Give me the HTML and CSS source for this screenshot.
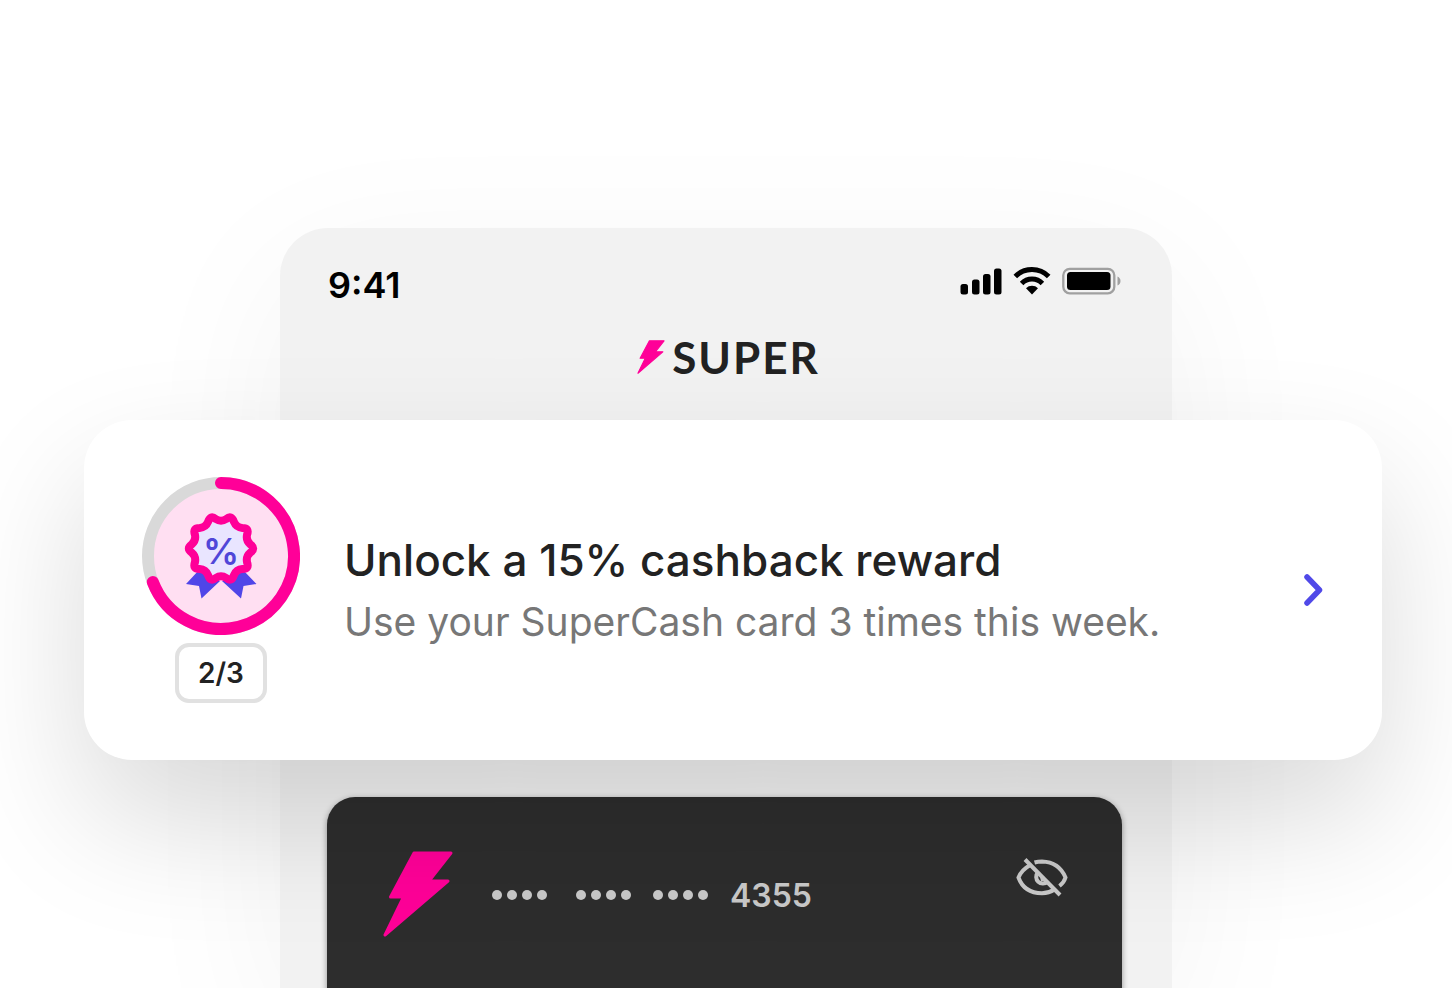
FILE: index.html
```html
<!DOCTYPE html>
<html lang="en">
<head>
<meta charset="utf-8">
<meta name="viewport" content="width=device-width, initial-scale=1">
<title>Super</title>
<link rel="stylesheet" href="styles.css">
</head>
<body>
<svg class="sprite" aria-hidden="true">
  <symbol id="bolt" viewBox="0 0 70 86">
    <path d="M31 2H68L46 30H65L2 84L20.500 46H7.500Z" fill="#ff0098" stroke="#ff0098" stroke-width="3" stroke-linejoin="round"/>
  </symbol>
</svg>
<main class="stage">
  <div class="phone"></div>
  <header class="header">
    <div class="status">
      <time class="clock">9:41</time>
      <div class="indicators">
        <svg width="42" height="28" viewBox="0 0 42 28" role="img" aria-label="Signal">
          <rect x="0.500" y="17" width="7.500" height="10.500" rx="2.500"/>
          <rect x="12" y="12.500" width="7.500" height="15" rx="2.500"/>
          <rect x="23" y="7" width="7.500" height="20.500" rx="2.500"/>
          <rect x="34" y="1.500" width="7.500" height="26" rx="2.500"/>
        </svg>
        <svg width="38" height="28" viewBox="0 0 38 28" role="img" aria-label="Wi-Fi">
          <path d="M2.300 9.500A23.500 23.500 0 0 1 35.700 9.500M8.600 16.500A14.500 14.500 0 0 1 29.400 16.500" fill="none" stroke="#000" stroke-width="5"/>
          <path d="M13 21.300A8.500 8.500 0 0 1 25 21.300L19 27.500Z"/>
        </svg>
        <svg width="59" height="28" viewBox="0 0 59 28" role="img" aria-label="Battery">
          <rect x="1.300" y="1.800" width="51" height="24.500" rx="6.500" fill="none" stroke="#a0a0a0" stroke-width="2.300"/>
          <rect x="5" y="5" width="43.500" height="18" rx="3.500"/>
          <path d="M55.500 9.500Q58.500 11 58.500 14T55.500 18.500Z" fill="#a0a0a0"/>
        </svg>
      </div>
    </div>
    <div class="brand">
      <svg class="brand-bolt" aria-hidden="true"><use href="#bolt"/></svg>
      <span>SUPER</span>
    </div>
  </header>

  <section class="reward">
    <div class="progress">
      <svg width="158" height="158" viewBox="0 0 158 158" role="img" aria-label="2 of 3 complete">
        <circle cx="79" cy="79" r="73" fill="#ffdff2" stroke="#d9d9d9" stroke-width="12"/>
        <path d="M79 6A73 73 0 1 1 10.800 105" fill="none" stroke="#ff0098" stroke-width="12" stroke-linecap="round"/>
        <path d="M44 107L57 93L78 104L59.500 121.500L57 109ZM114.500 107L101 93L80 104L99 121.500L101.500 109Z" fill="#5046e8"/>
        <path transform="translate(79 71.500)" fill="#e9e5ff" stroke="#ff0098" stroke-width="8" stroke-linejoin="round" d="M29.400 4Q24.700 8 26.100 14Q28.500 20.500 21.400 20.500Q15.300 21 12.900 26.700Q10.500 34 5.300 29.500Q0 26-5.300 29.500Q-10.500 34-12.900 26.700Q-15.300 21-21.400 20.500Q-28.500 20.500-26.100 14Q-24.700 8-29.400 4Q-35 0-29.400-4Q-24.700-8-26.100-14Q-28.500-20.500-21.400-20.500Q-15.300-21-12.900-26.700Q-10.500-34-5.300-29.500Q0-26 5.300-29.500Q10.500-34 12.900-26.700Q15.300-21 21.400-20.500Q28.500-20.500 26.100-14Q24.700-8 29.400-4Q35 0 29.400 4Z"/>
        <text class="percent" x="79" y="87" text-anchor="middle">%</text>
      </svg>
      <span class="count">2/3</span>
    </div>
    <div class="copy">
      <h1 class="title">Unlock a 15% cashback reward</h1>
      <p class="subtitle">Use your SuperCash card 3 times this week.</p>
    </div>
    <button class="icon-button" type="button" aria-label="Open reward">
      <svg width="20" height="34" viewBox="0 0 20 34"><path d="M3 4L15.500 17L3 30" fill="none" stroke="#5049e8" stroke-width="5.500" stroke-linecap="round" stroke-linejoin="round"/></svg>
    </button>
  </section>

  <section class="card">
    <svg class="card-bolt" aria-hidden="true"><use href="#bolt"/></svg>
    <div class="number">
      <span class="dots"><i></i><i></i><i></i><i></i></span>
      <span class="dots"><i></i><i></i><i></i><i></i></span>
      <span class="dots"><i></i><i></i><i></i><i></i></span>
      <span class="digits">4355</span>
    </div>
    <button class="icon-button eye" type="button" aria-label="Show card number">
      <svg width="52" height="40" viewBox="0 0 52 40" fill="none" stroke="#c9c9c9" stroke-width="4">
        <path d="M9 1.500L44 37"/>
        <path d="M13.500 7.500Q5.500 12 2.500 19.500Q8 35 26 35.300Q33 35 38.500 31.500"/>
        <path d="M18.500 4.500Q22 3.500 26 3.500Q43 4 49.500 19.500Q48 24.500 43.500 28"/>
        <path d="M22 14.500A6.500 6.500 0 1 0 31.500 23.500M26 18.500L27 23"/>
      </svg>
    </button>
  </section>
</main>
</body>
</html>
```
FILE: styles.css
```css
* {
  box-sizing: border-box;
}

body {
  margin: 0;
  background: #fff;
  color: #222;
  font-family: Inter, "Liberation Sans", sans-serif;
}

.sprite {
  position: absolute;
  width: 0;
  height: 0;
}

.stage {
  display: grid;
  grid-template-columns: 84px 196px minmax(0, 1fr) 210px 70px;
  grid-template-rows: auto auto 1fr;
  min-height: 100vh;
  padding-top: 228px;
  overflow: hidden;
}

.phone {
  grid-column: 3;
  grid-row: 1 / 4;
  background: #f2f2f2;
  border-radius: 48px 48px 0 0;
  box-shadow: 0 40px 160px rgba(0, 0, 0, 0.05);
}

.header {
  grid-column: 3;
  grid-row: 1;
  height: 192px;
  padding: 39px 51px 0 48px;
}

.status {
  display: flex;
  justify-content: space-between;
  align-items: flex-start;
}

.clock {
  color: #000;
  font-size: 36px;
  font-weight: 600;
  line-height: 36px;
}

.indicators {
  display: flex;
  gap: 11px;
}

.brand {
  display: flex;
  justify-content: center;
  align-items: center;
  gap: 7px;
  height: 48px;
  margin-top: 30px;
  padding-left: 8px;
  font-family: Lato, sans-serif;
  font-size: 44px;
  font-weight: 700;
  letter-spacing: 2px;
}

.brand-bolt {
  width: 28px;
  height: 34px;
}

.reward {
  z-index: 1;
  grid-column: 2 / 5;
  grid-row: 2;
  display: flex;
  align-items: center;
  gap: 44px;
  min-height: 340px;
  padding: 56px 58px;
  background: #fff;
  border-radius: 48px;
  box-shadow: 0 60px 130px rgba(0, 0, 0, 0.15);
}

.progress {
  display: flex;
  flex-direction: column;
  align-items: center;
  gap: 8px;
}

.percent {
  fill: #5046d8;
  font-size: 36px;
  font-weight: 600;
}

.count {
  padding: 8px 19px;
  border: 4px solid #e1e1e1;
  border-radius: 14px;
  font-size: 28px;
  font-weight: 600;
  line-height: 36px;
}

.copy {
  flex: 1;
  min-width: 0;
}

.title,
.subtitle {
  margin: 0;
  white-space: nowrap;
}

.title {
  font-size: 44px;
  font-weight: 500;
  line-height: 64px;
}

.subtitle {
  color: #777;
  font-size: 39px;
  line-height: 60px;
}

.icon-button {
  display: flex;
  padding: 0;
  border: 0;
  background: none;
  cursor: pointer;
}

.card {
  grid-column: 3;
  grid-row: 3;
  display: flex;
  align-items: flex-start;
  min-height: 190px;
  margin: 37px 50px 0 47px;
  padding: 54px 54px 54px 56px;
  background: #2d2d2d;
  border-radius: 28px 28px 0 0;
  box-shadow: 0 2px 6px rgba(0, 0, 0, 0.4);
}

.card-bolt {
  width: 70px;
  height: 86px;
}

.number {
  display: flex;
  flex: 1;
  align-items: center;
  gap: 22px;
  height: 88px;
  padding-left: 39px;
  color: #c9c9c9;
}

.dots {
  display: flex;
  gap: 5px;
}

.dots:first-child {
  margin-right: 7px;
}

.dots i {
  width: 10px;
  height: 10px;
  border-radius: 50%;
  background: #c9c9c9;
}

.digits {
  font-size: 32px;
  font-weight: 600;
}

.eye {
  margin-top: 7px;
}
```
